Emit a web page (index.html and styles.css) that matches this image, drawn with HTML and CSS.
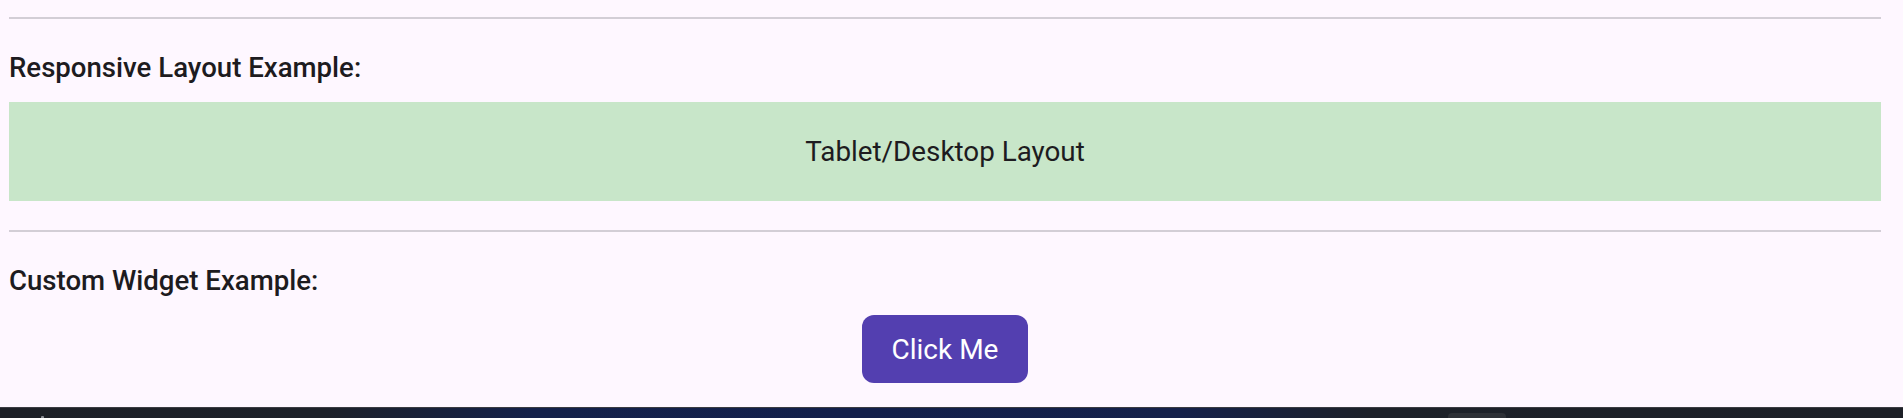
FILE: index.html
```html
<!DOCTYPE html>
<html lang="en">
<head>
<meta charset="utf-8">
<title>Examples</title>
<link rel="stylesheet" href="styles.css">
</head>
<body>
<div class="app">
  <div class="divider"></div>
  <h2 class="label">Responsive Layout Example:</h2>
  <div class="layout-box">Tablet/Desktop Layout</div>
  <div class="divider divider-second"></div>
  <h2 class="label">Custom Widget Example:</h2>
  <div class="button-row">
    <button class="custom-btn" type="button">Click Me</button>
  </div>
</div>
<div class="taskbar">
  <span class="taskbar-dot"></span>
  <span class="taskbar-tab"></span>
</div>
</body>
</html>
```

FILE: styles.css
```css
html, body {
  margin: 0;
  padding: 0;
  background: #fef7ff;
  overflow: hidden;
}

body {
  width: 1903px;
  height: 418px;
  font-family: Roboto, "Liberation Sans", sans-serif;
  color: #1d1b20;
}

.app {
  box-sizing: border-box;
  height: 407px;
  padding: 17px 22px 0 9px;
  display: flex;
  flex-direction: column;
  overflow: hidden;
}

.divider {
  height: 2px;
  background: #d3ced6;
  flex: none;
}

.divider-second {
  margin-top: 29px;
}

.label {
  margin: 32px 0 0 0;
  font-size: 27.6px;
  line-height: 33px;
  font-weight: 500;
  color: #1d1b20;
}

.layout-box {
  margin-top: 18px;
  height: 99px;
  background: #c8e6c9;
  display: flex;
  align-items: center;
  justify-content: center;
  font-size: 27.8px;
  line-height: 33px;
  font-weight: 400;
  color: #1d1b20;
}

.button-row {
  margin-top: 18px;
  display: flex;
  justify-content: center;
}

.custom-btn {
  height: 68px;
  width: 166px;
  border: none;
  border-radius: 12px;
  background: #533fb0;
  color: #ffffff;
  font-family: Roboto, "Liberation Sans", sans-serif;
  font-size: 28px;
  line-height: 33px;
  font-weight: 400;
  padding: 0;
  cursor: pointer;
}

.taskbar {
  height: 11px;
  box-sizing: border-box;
  border-top: 1px solid #3b3c42;
  background: linear-gradient(90deg, #1d2027 0%, #1d2129 17%, #14214a 28%, #13204b 45%, #15214a 62%, #1d2129 72%, #1d2027 100%);
  display: flex;
  align-items: flex-end;
  padding-left: 41px;
}

.taskbar-dot {
  width: 3px;
  height: 2px;
  background: #8a8d94;
  border-radius: 1px 1px 0 0;
}

.taskbar-tab {
  margin-left: 1404px;
  width: 58px;
  height: 5px;
  background: #2d3036;
  border-radius: 4px 4px 0 0;
}
```
